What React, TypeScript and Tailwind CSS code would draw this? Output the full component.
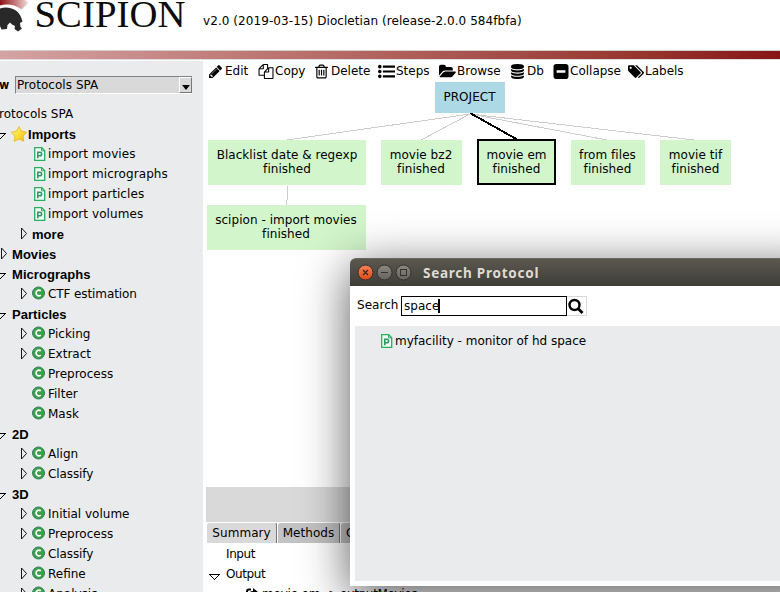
import React from "react";

const PATHS = {
  pencil:
    "M491 1536l91-91-235-235-91 91v107h128v128h107zm523-928q0-22-22-22-10 0-17 7l-542 542q-7 7-7 17 0 22 22 22 10 0 17-7l542-542q7-7 7-17zm-54-192l416 416-832 832h-416v-416zm683 96q0 53-37 90l-166 166-416-416 166-165q36-38 90-38 53 0 91 38l235 234q37 39 37 91z",
  files:
    "M1696 384q40 0 68 28t28 68v1216q0 40-28 68t-68 28h-960q-40 0-68-28t-28-68v-288h-544q-40 0-68-28t-28-68v-672q0-40 20-88t48-76l408-408q28-28 76-48t88-20h416q40 0 68 28t28 68v328q68-40 128-40h416zm-544 213l-299 299h299v-299zm-640-384l-299 299h299v-299zm196 647l316-316v-416h-384v416q0 40-28 68t-68 28h-416v640h512v-256q0-40 20-88t48-76zm956 804v-1152h-384v416q0 40-28 68t-68 28h-416v640h896z",
  trash:
    "M704 736v576q0 14-9 23t-23 9h-64q-14 0-23-9t-9-23v-576q0-14 9-23t23-9h64q14 0 23 9t9 23zm256 0v576q0 14-9 23t-23 9h-64q-14 0-23-9t-9-23v-576q0-14 9-23t23-9h64q14 0 23 9t9 23zm256 0v576q0 14-9 23t-23 9h-64q-14 0-23-9t-9-23v-576q0-14 9-23t23-9h64q14 0 23 9t9 23zm128 724v-948h-896v948q0 22 7 40.5t14.5 27 10.5 8.5h832q3 0 10.5-8.5t14.5-27 7-40.5zm-672-1076h448l-48-117q-7-9-17-11h-317q-10 2-17 11zm928 32v64q0 14-9 23t-23 9h-96v948q0 83-47 143.5t-113 60.5h-832q-66 0-113-58.5t-47-141.5v-952h-96q-14 0-23-9t-9-23v-64q0-14 9-23t23-9h309l70-167q15-37 54-63t79-26h320q40 0 79 26t54 63l70 167h309q14 0 23 9t9 23z",
  list: "M0 384a190 190 0 1 0 380 0a190 190 0 1 0 -380 0zM0 896a190 190 0 1 0 380 0a190 190 0 1 0 -380 0zM0 1408a190 190 0 1 0 380 0a190 190 0 1 0 -380 0zM512 270h1280v228h-1280zM512 782h1280v228h-1280zM512 1294h1280v228h-1280z",
  folder:
    "M1879 952q0 31-31 66l-336 396q-43 51-120.5 86.5t-143.5 35.5h-1088q-34 0-60.5-13t-26.5-43q0-31 31-66l336-396q43-51 120.5-86.5t143.5-35.5h1088q34 0 60.5 13t26.5 43zm-343-344v160h-832q-94 0-197 47.5t-164 119.5l-337 396-5 6q0-4-.5-12.5t-.5-12.5v-960q0-92 66-158t158-66h320q92 0 158 66t66 158v32h544q92 0 158 66t66 158z",
  database:
    "M896 768q237 0 443-43t325-127v170q0 69-103 128t-280 93.5-385 34.5-385-34.5-280-93.5-103-128v-170q119 84 325 127t443 43zm0 768q237 0 443-43t325-127v170q0 69-103 128t-280 93.5-385 34.5-385-34.5-280-93.5-103-128v-170q119 84 325 127t443 43zm0-384q237 0 443-43t325-127v170q0 69-103 128t-280 93.5-385 34.5-385-34.5-280-93.5-103-128v-170q119 84 325 127t443 43zm0-1152q208 0 385 34.5t280 93.5 103 128v128q0 69-103 128t-280 93.5-385 34.5-385-34.5-280-93.5-103-128v-128q0-69 103-128t280-93.5 385-34.5z",
  minus:
    "M416 128h960a288 288 0 0 1 288 288v960a288 288 0 0 1 -288 288h-960a288 288 0 0 1 -288 -288v-960a288 288 0 0 1 288 -288zM448 768v256h896v-256z",
  tags: "M448 448q0-53-37.5-90.5t-90.5-37.5-90.5 37.5-37.5 90.5 37.5 90.5 90.5 37.5 90.5-37.5 37.5-90.5zm1067 576q0 53-37 90l-491 492q-39 37-91 37-53 0-90-37l-715-716q-38-37-64.5-101t-26.5-117v-416q0-52 38-90t90-38h416q53 0 117 26.5t102 64.5l715 714q37 39 37 91zm384 0q0 53-37 90l-491 492q-39 37-91 37-36 0-59-14t-53-45l470-470q37-37 37-90 0-52-37-91l-715-714q-38-38-102-64.5t-117-26.5h224q53 0 117 26.5t102 64.5l715 714q37 39 37 91z",
};

const TOOLS: { label: string; d: string; box: string; icon: string; item: string }[] = [
  { label: "Edit", d: PATHS.pencil, box: "120 130 1530 1540", icon: "w-[13px] mr-[3px]", item: "w-[49px]" },
  { label: "Copy", d: PATHS.files, box: "0 0 1792 1792", icon: "w-4 mr-px", item: "w-[57px]" },
  { label: "Delete", d: PATHS.trash, box: "180 120 1430 1560", icon: "w-[13px] mr-[3px]", item: "w-[63px]" },
  { label: "Steps", d: PATHS.list, box: "0 190 1792 1410", icon: "w-[17px] mr-px", item: "w-[61px]" },
  { label: "Browse", d: PATHS.folder, box: "0 220 1890 1330", icon: "w-[17px] mr-px", item: "w-[72px]" },
  { label: "Db", d: PATHS.database, box: "128 0 1536 1792", icon: "w-[13px] mr-[3px]", item: "w-[42px]" },
  { label: "Collapse", d: PATHS.minus, box: "128 128 1536 1536", icon: "w-4 mr-px", item: "w-[75px]" },
  { label: "Labels", d: PATHS.tags, box: "0 120 1900 1530", icon: "w-4 mr-px", item: "w-[64px]" },
];

function RightTriangle() {
  return (
    <svg className="-mt-px h-[13px] w-[8px] shrink-0" viewBox="0 0 8 13" fill="none" stroke="#000" strokeWidth=".9">
      <path d="M1.5 1v11L6.5 6.5z" />
    </svg>
  );
}

function DownTriangle() {
  return (
    <svg className="h-[8px] w-[12px] shrink-0" viewBox="0 0 12 8" fill="none" stroke="#000" shapeRendering="crispEdges">
      <path d="M.5 1.5h10L5.5 6.5z" />
    </svg>
  );
}

function ClassIcon() {
  return (
    <svg className="h-[14px] w-[14px] shrink-0" viewBox="0 0 14 14">
      <circle cx="6.500" cy="7" r="6" fill="#39a047" stroke="#317f5d" strokeWidth="1" />
      <path d="M8.800 4.9C7.200 3.5 4.100 4.1 4.100 7s3.1 3.5 4.7 2.1" fill="none" stroke="#fff" strokeWidth="1.8" />
    </svg>
  );
}

function ProtocolIcon() {
  return (
    <svg className="h-[14px] w-[12px] shrink-0" viewBox="0 0 12 14">
      <path d="M.7.7h7l3 3v9.6H.7z" fill="#f4faf6" stroke="#27ae60" strokeWidth="1.3" />
      <path d="M7.5 .7v3.200h3.200" fill="none" stroke="#27ae60" />
      <path d="M3.800 11.3V5.200h2.100a1.700 1.700 0 0 1 0 3.500H3.800" fill="none" stroke="#299a68" strokeWidth="1.6" />
    </svg>
  );
}

function StarIcon() {
  return (
    <svg className="h-4 w-4 shrink-0" viewBox="0 0 16 16">
      <defs>
        <linearGradient id="star" x1="0" y1="0" x2="1" y2="1">
          <stop offset="0" stopColor="#fff5a0" />
          <stop offset=".5" stopColor="#fddf3a" />
          <stop offset="1" stopColor="#f3b70c" />
        </linearGradient>
      </defs>
      <path d="M8 .8l2.500 4.400 5.100 1-3.500 3.900.6 5.100L8 13.100l-4.700 2.100.6-5.100L.4 6.200l5.100-1z" fill="url(#star)" stroke="#e8bb1d" strokeWidth=".9" strokeLinejoin="round" />
    </svg>
  );
}

type Row = {
  label: string;
  kind: "group" | "more" | "class" | "protocol";
  open?: boolean;
  arrow?: boolean;
  star?: boolean;
  tight?: boolean;
};

const ROWS: Row[] = [
  { label: "Imports", kind: "group", open: true, star: true },
  { label: "import movies", kind: "protocol" },
  { label: "import micrographs", kind: "protocol" },
  { label: "import particles", kind: "protocol" },
  { label: "import volumes", kind: "protocol" },
  { label: "more", kind: "more" },
  { label: "Movies", kind: "group" },
  { label: "Micrographs", kind: "group", open: true },
  { label: "CTF estimation", kind: "class", arrow: true, tight: true },
  { label: "Particles", kind: "group", open: true },
  { label: "Picking", kind: "class", arrow: true },
  { label: "Extract", kind: "class", arrow: true },
  { label: "Preprocess", kind: "class" },
  { label: "Filter", kind: "class" },
  { label: "Mask", kind: "class" },
  { label: "2D", kind: "group", open: true },
  { label: "Align", kind: "class", arrow: true },
  { label: "Classify", kind: "class", arrow: true, tight: true },
  { label: "3D", kind: "group", open: true },
  { label: "Initial volume", kind: "class", arrow: true },
  { label: "Preprocess", kind: "class", arrow: true },
  { label: "Classify", kind: "class", tight: true },
  { label: "Refine", kind: "class", arrow: true },
  { label: "Analysis", kind: "class", arrow: true },
];

const BOLD = "mt-[2px] font-['Liberation_Sans',sans-serif] text-[13px] font-bold";

function TreeRow({ row }: { row: Row }) {
  if (row.kind === "group") {
    return (
      <li className="flex h-5 items-center">
        <span className={row.open ? "-ml-[5px] flex w-4 items-center pt-1" : "flex w-[11px] items-center"}>
          {row.open ? <DownTriangle /> : <RightTriangle />}
        </span>
        {row.star && <StarIcon />}
        <span className={BOLD + " ml-px"}>{row.label}</span>
      </li>
    );
  }
  if (row.kind === "more") {
    return (
      <li className="flex h-5 items-center pl-5">
        <RightTriangle />
        <span className={BOLD + " ml-1"}>{row.label}</span>
      </li>
    );
  }
  if (row.kind === "protocol") {
    return (
      <li className="flex h-5 items-center pl-[34px]">
        <ProtocolIcon />
        <span className="ml-[2px] tracking-[0.08px]">{row.label}</span>
      </li>
    );
  }
  return (
    <li className="flex h-5 items-center pl-5">
      <span className="flex w-[12px]">{row.arrow && <RightTriangle />}</span>
      <span className="-mt-[2px] flex"><ClassIcon /></span>
      <span className={row.tight ? "ml-[2px] tracking-[-0.1px]" : "ml-[2px] tracking-normal"}>{row.label}</span>
    </li>
  );
}

function Node({ place, lines }: { place: string; lines: string[] }) {
  return (
    <div className={"absolute flex flex-col items-center justify-center text-center leading-[14px] " + place}>
      {lines.map((l) => (
        <span key={l}>{l}</span>
      ))}
    </div>
  );
}

function Header() {
  return (
    <header className="flex h-[50px] items-start bg-white">
      <svg className="h-[50px] w-[200px] shrink-0" viewBox="0 0 200 50">
        <defs>
          <linearGradient id="crest" x1="0" y1="0" x2="1" y2="0">
            <stop offset="0" stopColor="#8d1518" />
            <stop offset=".45" stopColor="#bd6768" />
            <stop offset="1" stopColor="#f3dede" />
          </linearGradient>
        </defs>
        <path d="M0 0H25L28.500 3 21.500 9.500Q12 2.500 0 5.500z" fill="url(#crest)" />
        <path d="M0 8.500C8 5.500 18 9 21 17L22.500 21.500 20 23 20.500 27 22 28.500 18 31.500 14.500 29 15 26 12 24.500 10 22.500 7.500 25 7 29 1.500 29.500 0 26z" fill="#292929" />
        <text x="34.500" y="26.500" fontSize="37.500" textLength="151" lengthAdjust="spacingAndGlyphs" fontFamily="Liberation Serif, serif" fill="#0c0c0c">
          SCIPION
        </text>
      </svg>
      <span className="ml-[3px] mt-[13px] whitespace-nowrap tracking-[0.07px]">v2.0 (2019-03-15) Diocletian (release-2.0.0 584fbfa)</span>
    </header>
  );
}

function Sidebar() {
  return (
    <aside className="h-full w-[203px] shrink-0 overflow-hidden bg-[#e9ebec]">
      <div className="flex h-[42px] items-start pt-[15px]">
        <span className="-ml-px w-[16px] leading-[18px] [text-shadow:0.4px_0_0_#000]">w</span>
        <div className="flex h-[18px] w-[177px] items-center border-l border-t border-b border-l-[#828282] border-t-[#828282] border-b-white bg-[#d9d9d9] pl-px">
          <span className="grow">Protocols SPA</span>
          <span className="flex h-4 w-[13px] items-end justify-center border border-b-[#777] border-l-white border-r-[#777] border-t-white pb-[2px]">
            <svg className="h-[5px] w-[8px]" viewBox="0 0 8 5"><path d="M0 0h8L4 5z" /></svg>
          </span>
        </div>
      </div>
      <div className="-ml-px flex h-[21px] items-center pt-px">rotocols SPA</div>
      <ul>
        {ROWS.map((r, i) => (
          <TreeRow key={i} row={r} />
        ))}
      </ul>
    </aside>
  );
}

function Toolbar() {
  return (
    <nav className="flex h-5 items-center pl-[6px]">
      {TOOLS.map((t) => (
        <div key={t.label} className={"flex shrink-0 items-center whitespace-nowrap " + t.item}>
          <svg className={"h-[15px] shrink-0 " + t.icon} viewBox={t.box} fillRule="evenodd">
            <path d={t.d} />
          </svg>
          <span className="tracking-normal">{t.label}</span>
        </div>
      ))}
    </nav>
  );
}

/* Project graph: nodes sit at free positions on the canvas. */
function Graph() {
  return (
    <div className="relative h-[406px] overflow-hidden">
      <svg className="absolute left-0 top-0 h-[406px] w-[577px]" viewBox="0 0 577 406" fill="none" stroke="#ccc" shapeRendering="crispEdges">
        <path d="M267 33L84 59M267 33L218 59M267 33L404 59M267 33L491 59M84.500 105v9L83.500 124" />
        <path d="M267 32L315 59" stroke="#000" strokeWidth="2" />
      </svg>
      <Node place="left-[232px] top-px h-[31px] w-[70px] bg-[#add8e6] pr-px pb-[2px]" lines={["PROJECT"]} />
      <Node place="left-[5px] top-[59px] h-[45px] w-[158px] bg-[#d2f5cb] pb-[2px]" lines={["Blacklist date & regexp", "finished"]} />
      <Node place="left-[178px] top-[59px] h-[45px] w-[81px] bg-[#d2f5cb] pb-[2px] pr-px" lines={["movie bz2", "finished"]} />
      <Node place="left-[274px] top-[58px] h-[46px] w-[79px] border-2 border-black bg-[#d2f5cb]" lines={["movie em", "finished"]} />
      <Node place="left-[368px] top-[59px] h-[45px] w-[74px] bg-[#d2f5cb] pb-[2px] pr-px" lines={["from files", "finished"]} />
      <Node place="left-[457px] top-[59px] h-[45px] w-[71px] bg-[#d2f5cb] pb-[2px]" lines={["movie tif", "finished"]} />
      <Node place="left-[4px] top-[124px] h-[45px] w-[159px] bg-[#d2f5cb] pb-[2px] pr-px" lines={["scipion - import movies", "finished"]} />
    </div>
  );
}

function Details() {
  return (
    <section className="pl-[3px]">
      <div className="h-[35px] bg-[#d9d9d9]" />
      <div className="flex h-[21px] bg-white pl-px">
        <span className="flex w-[70px] items-center justify-center rounded-t-[3px] border-r border-t border-r-[#777] border-t-white bg-[#d9d9d9]">Summary</span>
        <span className="ml-px flex w-[62px] items-center justify-center rounded-t-[3px] border-r border-t border-r-[#777] border-t-white bg-[#c3c3c3]">Methods</span>
        <span className="ml-px flex w-[62px] items-center rounded-t-[3px] border-t border-t-white bg-[#c3c3c3] pl-[5px]">Output</span>
      </div>
      <div className="flex h-[21px] items-center pl-5 pt-px tracking-[-0.4px]">Input</div>
      <div className="flex h-5 items-center pl-[3px]">
        <span className="mt-[5px] flex"><DownTriangle /></span>
        <span className="ml-[5px] tracking-[-0.4px]">Output</span>
      </div>
      <div className="flex h-[19px] items-center pl-10">
        <svg className="h-[11px] w-3" viewBox="0 0 12 11" fill="none" stroke="#000" strokeWidth="2">
          <path d="M5 1.500H3Q1 1.500 1 3.500V10H9V7M4 7Q4 4 7 4H8" />
          <path d="M7 0l5 4-5 4z" fill="#000" stroke="none" />
        </svg>
        <span className="ml-1 flex tracking-[-0.2px]">
          <span className="w-16 whitespace-nowrap">movie em</span>
          <span className="w-[14px] whitespace-nowrap tracking-[-2px]">-&gt;</span>
          <span className="tracking-[-0.35px]">outputMovies</span>
        </span>
      </div>
    </section>
  );
}

function WindowButton({ kind }: { kind: "close" | "min" | "max" }) {
  const fill = kind === "close" ? "url(#closeFill)" : "url(#plainFill)";
  return (
    <svg className="h-[17px] w-[17px]" viewBox="0 0 17 17">
      <defs>
        <linearGradient id="closeFill" x1="0" y1="0" x2="0" y2="1">
          <stop offset="0" stopColor="#f4825b" />
          <stop offset="1" stopColor="#df4a16" />
        </linearGradient>
        <linearGradient id="plainFill" x1="0" y1="0" x2="0" y2="1">
          <stop offset="0" stopColor="#8b887f" />
          <stop offset="1" stopColor="#65635c" />
        </linearGradient>
      </defs>
      <circle cx="8.500" cy="8.500" r="7.500" fill={fill} stroke="#33322e" />
      {kind === "close" && <path d="M6 6l5 5M11 6l-5 5" stroke="#3b2a22" strokeWidth="1.300" />}
      {kind === "min" && <path d="M5 8.500h7" stroke="#33322e" />}
      {kind === "max" && <rect x="5.500" y="5.500" width="6" height="6" fill="none" stroke="#33322e" />}
    </svg>
  );
}

function SearchWindow() {
  return (
    <div className="absolute left-[350px] top-[258px] h-[328px] w-[480px] overflow-visible rounded-t-[6px] bg-white shadow-[0_10px_48px_rgba(0,0,0,0.66)]">
      <div className="flex h-7 items-center gap-[2px] rounded-t-[6px] border-t border-[#6a675e] bg-linear-to-b from-[#5b584f] to-[#3e3d38] pl-[7px]">
        <WindowButton kind="close" />
        <WindowButton kind="min" />
        <WindowButton kind="max" />
        <span className="ml-[9px] font-['Noto_Sans',sans-serif] text-[13.5px] font-bold tracking-[0.75px] text-[#dfdbd2]">Search Protocol</span>
      </div>
      <div className="flex h-10 items-start pl-[7px] pt-[10px]">
        <span className="w-11 leading-[18px]">Search</span>
        <div className="flex h-5 w-[166px] items-center border border-black pl-[2px]">
          <span>space</span>
          <span className="-ml-px h-[14px] w-[2px] bg-black" />
        </div>
        <div className="flex h-5 w-5 items-center justify-center border border-l-0 border-[#d9d9d9] pr-px">
          <svg className="h-4 w-4 shrink-0" viewBox="0 0 16 16" fill="none" stroke="#000">
            <circle cx="6.500" cy="7" r="5" strokeWidth="2.400" />
            <path d="M10 10.500L14.500 15" strokeWidth="2.800" />
          </svg>
        </div>
      </div>
      <div className="ml-[5px] h-[255px] bg-[#e9ebec] pt-[5px]">
        <div className="flex h-5 items-center pl-[26px]">
          <ProtocolIcon />
          <span className="ml-[2px] whitespace-nowrap tracking-normal">myfacility - monitor of hd space</span>
        </div>
      </div>
    </div>
  );
}

export default function App() {
  return (
    <div className="relative flex h-[592px] w-[780px] flex-col overflow-hidden bg-white font-['DejaVu_Sans',sans-serif] text-[12px] leading-4 tracking-[0.05px] text-black">
      <Header />
      <div className="mb-px h-[10px] shrink-0 border-b border-t border-b-[#dedede] border-t-[#d5d0ce] bg-linear-to-r from-[#d4a3a3] to-[#871515]" />
      <div className="flex min-h-0 grow">
        <Sidebar />
        <main className="min-w-0 grow">
          <Toolbar />
          <Graph />
          <Details />
        </main>
      </div>
      <SearchWindow />
    </div>
  );
}
